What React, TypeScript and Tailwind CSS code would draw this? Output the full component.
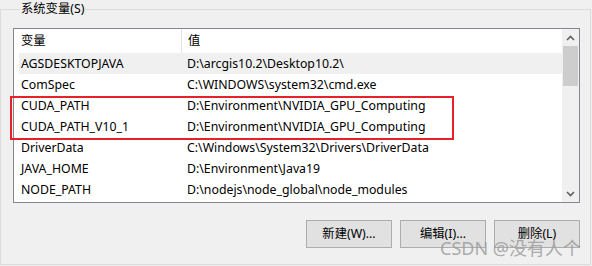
import React from "react";

const rows: [string, string][] = [
  ["AGSDESKTOPJAVA", "D:\\arcgis10.2\\Desktop10.2\\"],
  ["ComSpec", "C:\\WINDOWS\\system32\\cmd.exe"],
  ["CUDA_PATH", "D:\\Environment\\NVIDIA_GPU_Computing"],
  ["CUDA_PATH_V10_1", "D:\\Environment\\NVIDIA_GPU_Computing"],
  ["DriverData", "C:\\Windows\\System32\\Drivers\\DriverData"],
  ["JAVA_HOME", "D:\\Environment\\Java19"],
  ["NODE_PATH", "D:\\nodejs\\node_global\\node_modules"],
];

export default function App() {
  const font = { fontFamily: '"Segoe UI", "Noto Sans", "Noto Sans CJK SC", sans-serif' };
  return (
    <div className="w-[592px] h-[266px] bg-[#f0f0f0] overflow-hidden relative text-[12.3px] text-black" style={font}>
      <fieldset className="w-[591px] h-[265px] border border-[#dcdcdc] pl-[12px] pr-[10px]">
        <legend className="ml-[7px] px-[1px] leading-[18px] text-[12.3px]">系统变量(S)</legend>
        <div className="mt-[10px] w-[567px] h-[175px] border border-[#828790] bg-white flex relative">
          <div className="flex-1 flex flex-col">
            <div className="h-[24px] flex items-center">
              <div className="w-[168px] pl-[7px] h-full flex items-center border-r border-[#e5e5e5]">变量</div>
              <div className="pl-[6px]">值</div>
            </div>
            {rows.map(([k, v], i) => (
              <div key={k} className="h-[21px] pl-[5px] flex">
                <div className={`flex-1 flex items-center pt-[1px] ${i === 0 ? "bg-[#f0f0f0]" : ""}`}>
                  <div className="w-[168px] pl-[2px] whitespace-nowrap">{k}</div>
                  <div className="whitespace-nowrap">{v}</div>
                </div>
              </div>
            ))}
          </div>
          <div className="w-[17px] bg-[#f0f0f0] flex flex-col items-center">
            <div className="h-[17px] flex items-center justify-center">
              <svg width="9" height="6" viewBox="0 0 9 6"><path d="M1 5 L4.5 1.5 L8 5" fill="none" stroke="#606060" strokeWidth="1.6" /></svg>
            </div>
            <div className="w-[15px] h-[40px] bg-[#cdcdcd]" />
            <div className="flex-1" />
            <div className="h-[17px] flex items-center justify-center">
              <svg width="9" height="6" viewBox="0 0 9 6"><path d="M1 1 L4.5 4.5 L8 1" fill="none" stroke="#606060" strokeWidth="1.6" /></svg>
            </div>
          </div>
        </div>
        <div className="mt-[17px] w-[567px] flex justify-end gap-[8px]">
          {["新建(W)...", "编辑(I)...", "删除(L)"].map((b) => (
            <div key={b} className="w-[86px] h-[28px] bg-[#e1e1e1] border border-[#adadad] flex items-center justify-center">{b}</div>
          ))}
        </div>
      </fieldset>
      <div className="absolute left-[10px] top-[96px] w-[444px] h-[44px] border-2 border-[#e8202a]" />
      <div className="absolute left-[440px] top-[235px] text-[18px] text-[#9a9a9a] opacity-80 whitespace-nowrap" style={{ fontFamily: '"Noto Sans", "Noto Sans CJK SC", sans-serif' }}>CSDN @没有人个</div>
    </div>
  );
}
